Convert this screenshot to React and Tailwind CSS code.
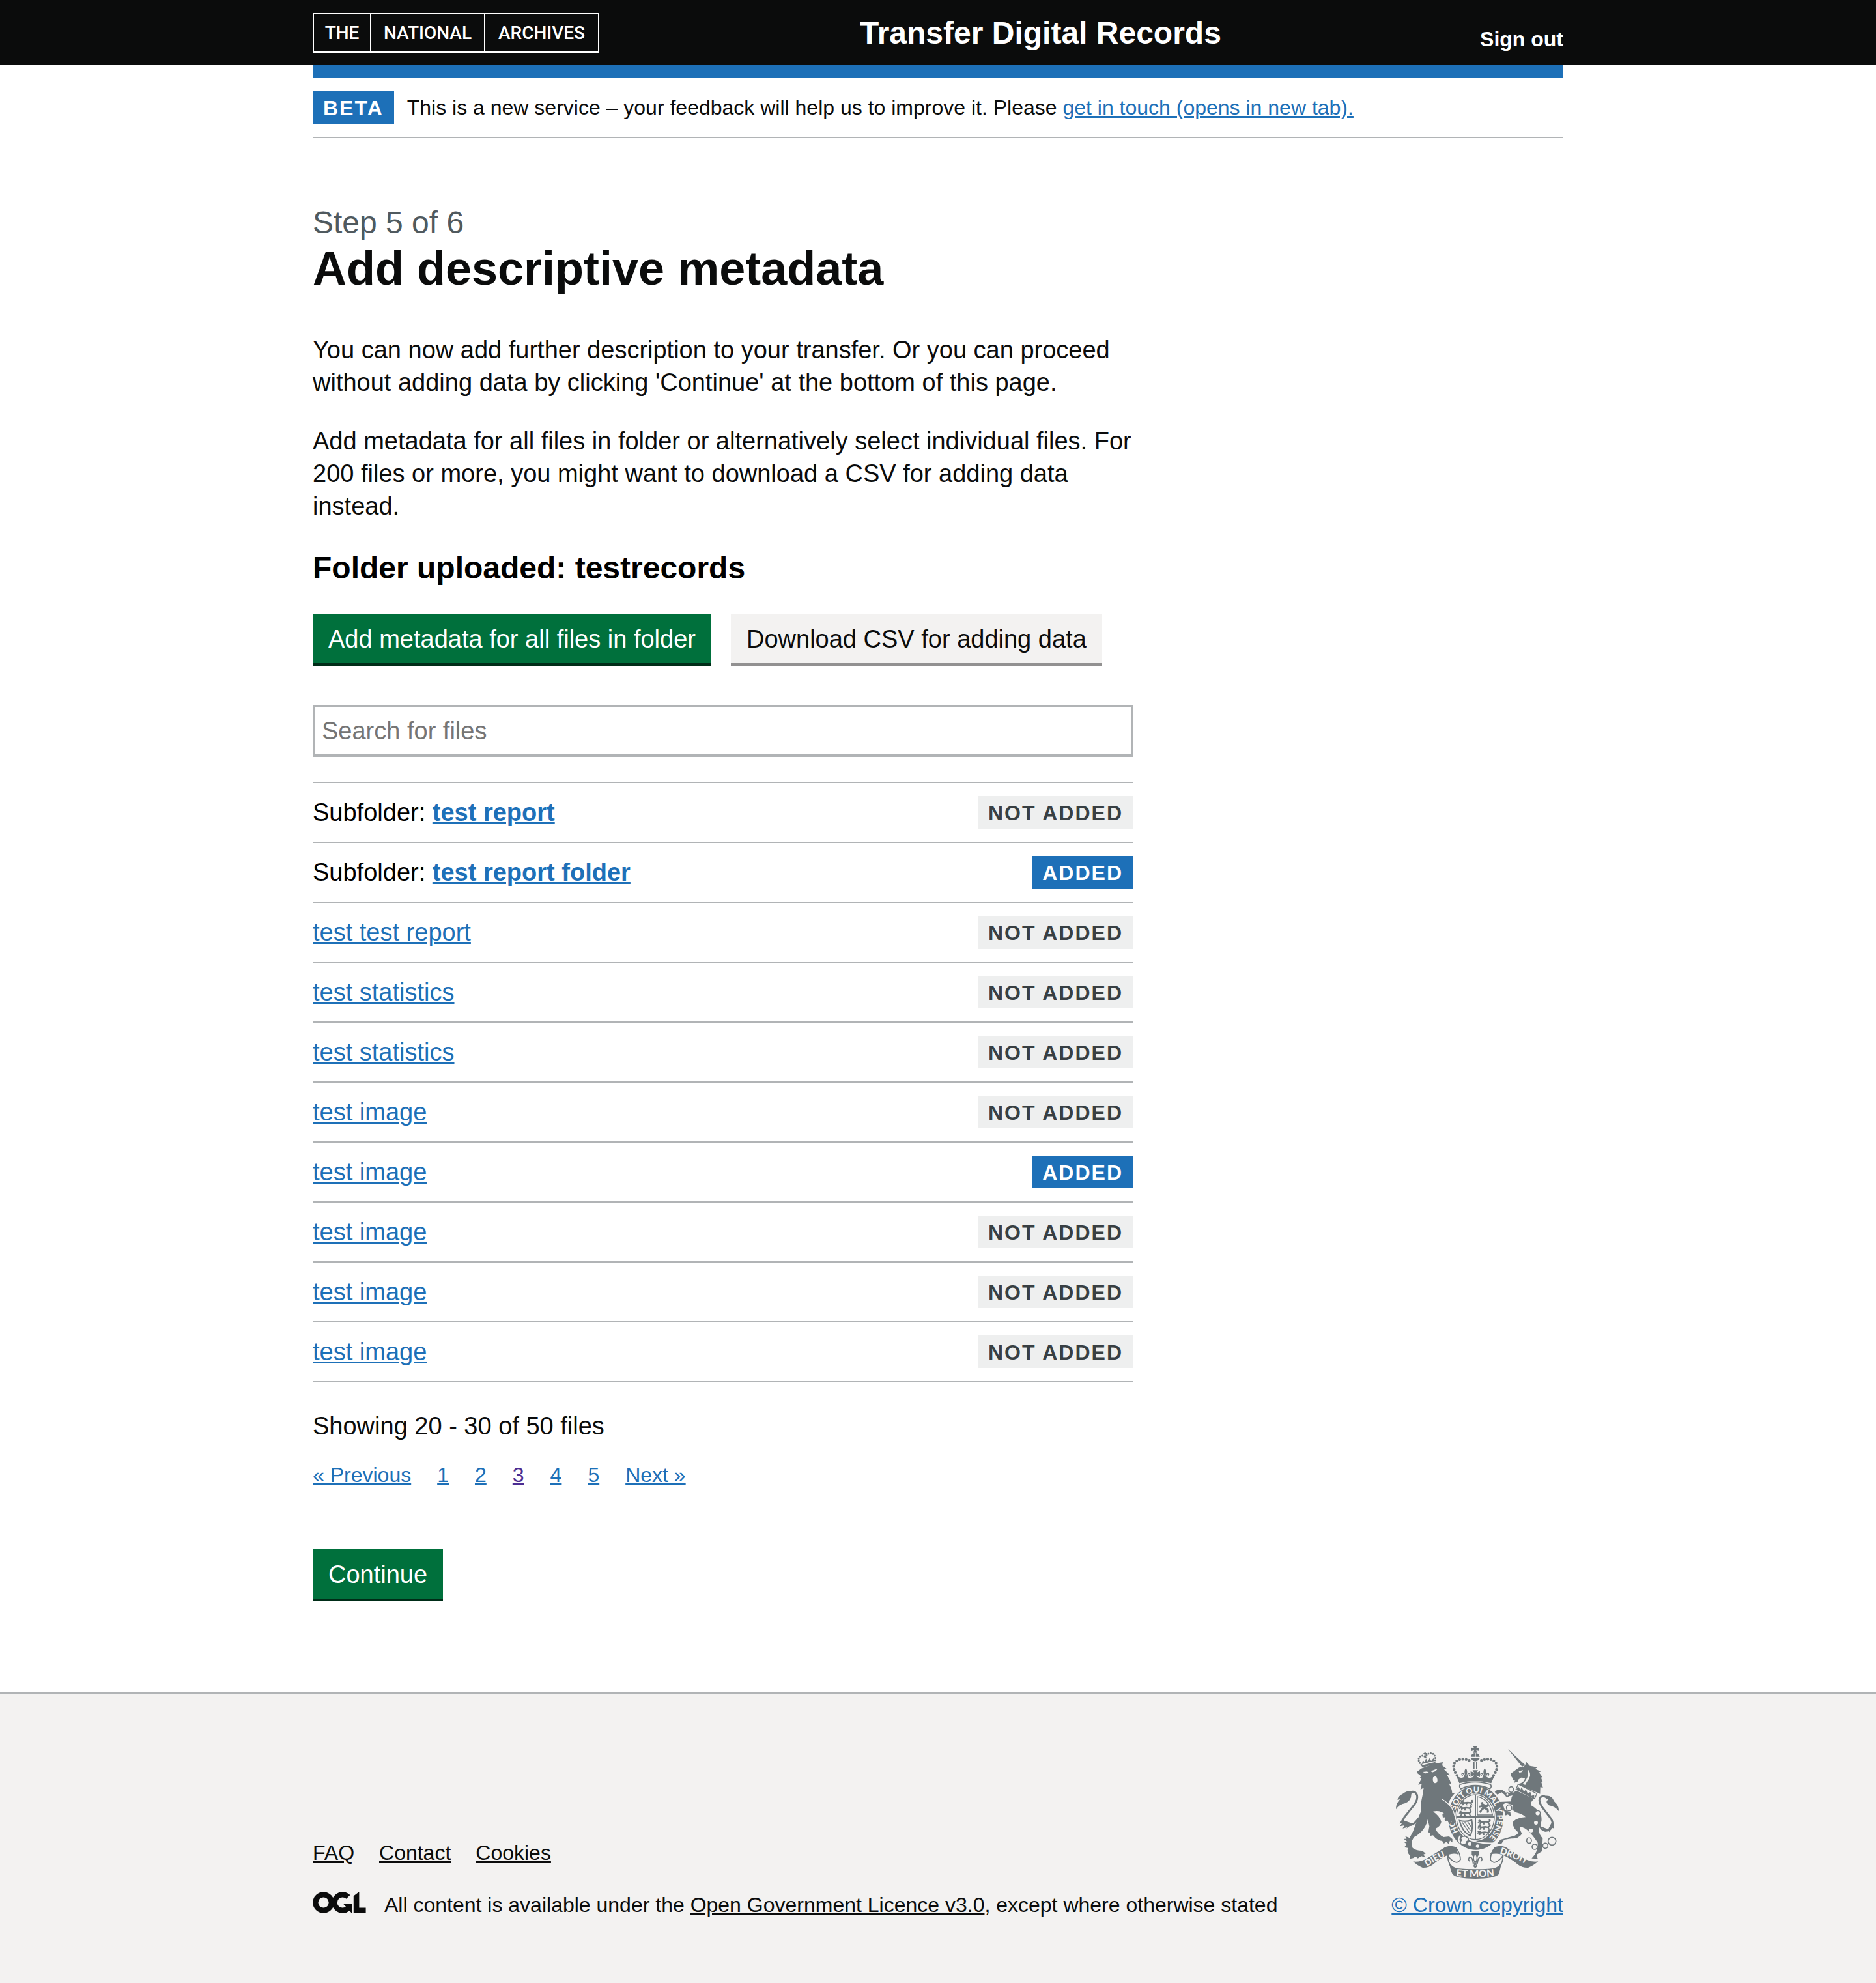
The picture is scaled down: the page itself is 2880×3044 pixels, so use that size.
const files = [
  { name: 'test report', folder: true, added: false },
  { name: 'test report folder', folder: true, added: true },
  { name: 'test test report', added: false },
  { name: 'test statistics', added: false },
  { name: 'test statistics', added: false },
  { name: 'test image', added: false },
  { name: 'test image', added: true },
  { name: 'test image', added: false },
  { name: 'test image', added: false },
  { name: 'test image', added: false },
];

const pages = ['« Previous', '1', '2', '3', '4', '5', 'Next »'];

function Container({ className = '', children }) {
  return <div className={'mx-auto w-full max-w-[1920px] ' + className}>{children}</div>;
}

function Tag({ tone, children }) {
  const tones = {
    blue: 'bg-[#1d70b8] text-white',
    grey: 'bg-[#eeefef] text-[#383f43]',
  };
  return (
    <strong className={'inline-block shrink-0 px-4 pt-[10px] pb-2 text-[32px] leading-8 font-bold tracking-[2px] uppercase ' + tones[tone]}>
      {children}
    </strong>
  );
}

function Button({ secondary, children }) {
  const look = secondary
    ? 'bg-[#f3f2f1] text-[#0b0c0c] shadow-[0_4px_0_#929191]'
    : 'bg-[#00703c] text-white shadow-[0_4px_0_#002d18]';
  return (
    <button type="button" className={'px-6 pt-5 pb-[18px] text-[38px] leading-[38px] ' + look}>
      {children}
    </button>
  );
}

function ArchivesLogo() {
  return (
    <a
      href="#"
      aria-label="The National Archives"
      className="grid h-[61px] w-fit grid-cols-[88px_175px_173px] divide-x-2 divide-white border-2 border-white text-center font-[Roboto,sans-serif] text-[28px] leading-[57px] font-medium text-white"
    >
      <span>THE</span>
      <span>NATIONAL</span>
      <span>ARCHIVES</span>
    </a>
  );
}

function OglLogo() {
  return (
    <svg viewBox="30 42 246 100" className="h-[33px] w-[82px] shrink-0" role="img" aria-label="Open Government Licence">
      <circle cx="79" cy="92" r="37" fill="none" stroke="#0b0c0c" strokeWidth="25" />
      <path d="M194 66A37 37 0 1 0 194 118" fill="none" stroke="#0b0c0c" strokeWidth="25" />
      <path d="M170 97H211V142L202 132L186 132L186 114Z" fill="#0b0c0c" />
      <path d="M219 62L245 42V116H276V141H219Z" fill="#0b0c0c" />
    </svg>
  );
}

function Crest() {
  const ink = '#6f777b';
  const paper = '#f3f2f1';
  const motto = { fill: paper, fontFamily: 'Lato, sans-serif', fontWeight: 900 };
  return (
    <svg viewBox="69 60 750 612" className="h-[204px] w-[250px]" fill={ink} aria-hidden="true">
      <defs>
        <path id="garter" d="M437 507A98 116 0 0 1 437 275A98 116 0 0 1 437 507" />
        <path id="dieu" d="M212 616Q262 584 322 556" />
        <path id="etmon" d="M346 660Q434 668 530 659" />
        <path id="droit" d="M546 556Q610 574 690 616" />
        <g id="passant">
          <path d="M0 6L7 0L13 2L17 7L34 5L46 7L52 3L49 -2L55 -4L60 2L57 10L52 12L55 19L60 21L50 22L46 14L34 13L30 17L34 22L24 22L24 14L17 15L13 22L4 22L9 18L9 12L3 16L-2 14L4 10Z" />
        </g>
        <g id="fleur">
          <path d="M0 -30Q-10 -14 -4 0L-3 14H3L4 0Q10 -14 0 -30Z" />
          <path d="M-5 12Q-8 -8 -17 -6Q-21 2 -14 5M5 12Q8 -8 17 -6Q21 2 14 5" fill="none" stroke={ink} strokeWidth="5" />
        </g>
      </defs>

      {/* lion: crown */}
      <path d="M186 150L250 134L254 142L191 160Z" />
      <path d="M186 147Q168 128 176 113Q190 98 205 112M205 112Q212 90 238 95Q256 108 248 131" fill="none" stroke={ink} strokeWidth="9" strokeLinecap="round" strokeDasharray="0 11" />
      <path d="M188 144L193 126L202 136L207 118L216 132L225 114L231 130L242 116L246 130Z" />
      <path d="M196 96H210M203 89V112" stroke={ink} strokeWidth="6" />

      {/* lion: body */}
      <path d="M168 178L186 164L245 142L285 135L282 150L303 166L290 167L319 196L303 193Q318 215 324 237L312 232Q328 258 328 278L342 276Q322 296 310 325L330 360L344 408L330 420L322 408L316 420L309 404L297 405L292 398L300 388L285 390L283 376L292 370L276 364Q262 357 240 362Q270 382 278 410Q274 430 250 442Q264 468 288 480L314 477L329 489V505L318 496L312 513L302 502L290 510L282 498Q258 496 240 472L228 474V460L218 458L223 430L215 398Q210 430 186 455Q165 475 152 480Q136 502 146 530Q165 544 190 543L206 556L196 560L204 574L186 568L170 578L160 570L148 577L134 580L135 566Q118 552 124 530L108 527L118 512L105 502L120 500L105 488L118 488L112 476L132 484Q150 455 160 420Q172 390 184 362Q182 320 192 285L197 252L182 262L188 234L172 240L187 210L178 208L186 200L168 186Z" />
      <path d="M193 180L212 178L222 184L205 187ZM230 176L262 164L252 176L236 182ZM240 205Q256 192 260 215Q262 232 248 232Q236 228 240 205Z" fill={paper} />
      <path d="M174 392Q150 432 118 424Q90 416 108 388L148 338Q174 306 165 284Q156 266 136 273" fill="none" stroke={ink} strokeWidth="9" />
      <path d="M146 270Q124 262 102 280Q78 292 76 308L88 306Q68 326 69 352Q82 330 112 324Q140 312 140 282Z" />
      <path d="M96 400L86 418L98 414L88 430L108 426L100 440L122 434L116 442L146 418Z" />

      {/* unicorn: horn, head and mane */}
      <path d="M585 75L664 148L650 156Z" />
      <path d="M598 198L600 186Q622 170 636 160L658 155L665 146L668 133L686 152L721 158L710 166L736 178L728 182L744 204L737 206L746 228L739 228L746 252L734 250L733 281L722 276L628 236Q660 232 664 208L646 206Q630 214 630 224L614 230L617 218L606 220L608 210Z" />
      <path d="M634 176L654 172L650 180L638 184ZM676 168Q700 192 672 226L664 240L654 234Q684 206 676 168Z" fill={paper} />
      <path d="M632 236L718 280L708 303L622 260Z" fill={paper} stroke={ink} strokeWidth="4" />
      <path d="M624 262L632 246L642 262L648 250L658 270L668 262L676 280L688 272L694 290L706 284L706 302Z" />

      {/* garter */}
      <ellipse cx="437" cy="391" rx="127" ry="148" />
      <ellipse cx="435" cy="389" rx="93" ry="109" fill={paper} />
      <ellipse cx="435" cy="388" rx="87" ry="103" fill={paper} stroke={ink} strokeWidth="4" />
      <text fontSize="37" {...motto}>
        <textPath href="#garter" startOffset="100">{'HO\u00a0\u00a0\u00a0\u00a0\u00a0SOIT QUI MAL Y PENSE'}</textPath>
      </text>
      <path d="M435 286V492M347 387H523" stroke={ink} strokeWidth="6" />

      {/* unicorn: body and legs */}
      <path d="M624 266L705 304Q686 322 692 334Q722 350 738 382Q744 410 730 436Q722 462 745 486L742 545L716 562L722 580L694 578Q724 548 722 506Q700 470 672 446Q652 432 640 432Q640 452 650 464Q634 488 600 487L568 492L554 512L534 512L550 492Q572 486 606 476Q630 470 632 458Q606 436 607 412Q620 392 666 388Q654 374 622 366L604 354L606 332L575 322L562 330L570 354L596 366L598 384L584 376L574 380L568 360L552 352L544 318L600 316Q598 300 606 288L580 294L556 274L536 284L524 272L536 262L560 264L582 280L608 276Z" />
      <path d="M730 424Q742 458 772 448Q802 432 784 396L744 344Q722 312 734 297Q752 284 768 304" fill="none" stroke={ink} strokeWidth="9" />
      <path d="M756 290Q788 286 798 316L808 326Q820 340 819 360Q800 338 774 334Q754 316 770 308Z" />
      <path d="M792 402L796 440L784 434L778 458L766 446L756 456L740 432L770 444Z" />
      <g fill={paper} stroke={ink} strokeWidth="5">
        <ellipse cx="600" cy="261" rx="11" ry="13" />
        <ellipse cx="582" cy="284" rx="7" ry="8" />
        <ellipse cx="590" cy="345" rx="12" ry="14" />
        <circle cx="722" cy="370" r="12" />
        <ellipse cx="682" cy="496" rx="11" ry="13" />
        <circle cx="708" cy="525" r="12" />
        <circle cx="757" cy="520" r="12" />
        <circle cx="788" cy="499" r="18" />
      </g>
      <circle cx="714" cy="414" r="9" fill={paper} />
      <circle cx="691" cy="450" r="9" fill={paper} />

      {/* royal crown */}
      <path d="M425 60H443L439 72L452 68V84L439 80L443 92H425L429 80L417 84V68L429 72Z" />
      <path d="M414 110Q418 94 432 93V110ZM437 93Q452 94 455 110H437ZM414 115H455Q452 130 434 131Q418 130 414 115Z" />
      <path d="M350 196Q326 160 340 138Q362 108 416 130M519 196Q543 160 529 138Q507 108 453 130" fill="none" stroke={ink} strokeWidth="13" strokeLinecap="round" strokeDasharray="0 15" />
      <path d="M428 134V168M441 134V168" stroke={ink} strokeWidth="6" />
      <path d="M344 192Q358 206 372 208Q384 204 390 196Q398 208 412 208L434 200L456 208Q472 208 479 196Q486 204 497 208Q512 206 525 192L508 232Q434 212 361 232Z" />
      <use href="#fleur" x="391" y="192" />
      <use href="#fleur" x="478" y="192" />
      <path d="M422 172H447L440 184L456 176V204L440 196L447 212H422L429 196L413 204V176L429 184Z" />
      <path d="M364 238Q434 214 505 238Q512 248 502 258Q434 226 368 258Q358 248 364 238Z" fill={paper} stroke={ink} strokeWidth="5" />

      {/* shield quarters */}
      <use href="#passant" x="366" y="312" />
      <use href="#passant" x="360" y="336" />
      <use href="#passant" x="358" y="359" />
      <use href="#passant" x="446" y="400" />
      <use href="#passant" x="446" y="424" />
      <use href="#passant" x="444" y="449" />
      <path d="M444 378V294Q498 304 514 378Z" fill="none" stroke={ink} strokeWidth="4" />
      <path d="M456 322L468 318L472 326L484 332L492 326L486 318L496 322L496 338L486 344L496 352L498 366L488 368L488 358L476 350L466 358L460 370L452 364L462 350L466 342L452 344L452 336L466 332Z" />
      <path d="M362 404Q388 412 418 402Q426 440 412 474Q374 456 362 404Z" fill="none" stroke={ink} strokeWidth="6" />
      <path d="M374 412L408 462M386 411L412 450M399 409L416 434" stroke={ink} strokeWidth="4" />

      {/* lion: foreleg over the garter */}
      <path d="M282 308Q318 330 332 362L346 408L332 422L324 408L316 422L306 402L290 380Z" />
      <path d="M282 306Q320 328 334 362L347 406" fill="none" stroke={paper} strokeWidth="4" />

      {/* buckle and strap */}
      <path d="M392 484Q440 512 520 508" fill="none" stroke={paper} strokeWidth="6" />
      <path d="M366 472Q350 492 368 512" stroke={paper} strokeWidth="6" fill="none" />
      <path d="M366 484Q384 468 400 484Q408 494 396 500Q394 516 374 516Q358 502 372 496Z" fill={paper} stroke={ink} strokeWidth="5" />
      <circle cx="409" cy="511" r="8" fill={paper} />
      <circle cx="445" cy="522" r="8" fill={paper} />
      <path d="M418 546H452V560L443 574H426L418 560Z" />
      <path d="M434 556Q420 574 430 592H439Q449 574 434 556ZM424 598Q422 572 408 572Q398 584 410 592M445 598Q447 572 461 572Q471 584 459 592M422 600H447M434 600L428 614L434 620L441 614Z" fill={paper} stroke={ink} strokeWidth="5" />

      {/* ribbons */}
      <path d="M148 592Q176 596 206 582L284 534Q312 514 345 526L356 560Q334 552 310 562Q270 580 240 606Q220 622 192 621Q168 612 148 592Z" />
      <path d="M724 592Q694 596 664 582L586 534Q558 514 525 526L502 560Q536 552 560 562Q600 580 630 606Q650 622 678 621Q702 612 724 592Z" />
      <path d="M345 528Q366 556 366 584Q352 606 332 590Q310 576 308 560M308 562Q306 590 324 620M525 528Q504 556 504 584Q518 606 538 590Q560 576 562 560M562 562Q564 590 546 620" fill="none" stroke={ink} strokeWidth="5" />
      <path d="M314 592Q322 616 350 624Q434 632 520 624Q548 616 556 592Q550 630 542 652Q520 672 435 672Q350 672 330 652Q318 630 314 592Z" />
      <text fontSize="41" {...motto}><textPath href="#dieu">DIEU</textPath></text>
      <text fontSize="45" {...motto}><textPath href="#etmon">ET MON</textPath></text>
      <text fontSize="42" {...motto}><textPath href="#droit">DROIT</textPath></text>
    </svg>
  );
}

export default function App() {
  return (
    <div className="min-h-screen bg-[#f3f2f1] font-['Liberation_Sans',Arial,sans-serif] text-[#0b0c0c]">
      <header className="bg-[#0b0c0c] text-white">
        <Container className="grid h-[100px] grid-cols-[7fr_9fr]">
          <div className="pt-5">
            <ArchivesLogo />
          </div>
          <div className="flex items-end justify-between pb-5">
            <a href="#" className="text-[48px] leading-[58px] font-bold">Transfer Digital Records</a>
            <a href="#" className="text-[32px] leading-10 font-bold">Sign out</a>
          </div>
        </Container>
      </header>

      <div className="bg-white">
        <Container>
          <div className="h-5 bg-[#1d70b8]" />
          <div className="flex items-center gap-5 border-b-2 border-[#b1b4b6] py-5 text-[32px] leading-10">
            <Tag tone="blue">Beta</Tag>
            <p>
              This is a new service – your feedback will help us to improve it. Please{' '}
              <a href="#" className="text-[#1d70b8] underline">get in touch (opens in new tab).</a>
            </p>
          </div>

          <main className="grid grid-cols-3 gap-[60px] pt-[100px] pb-36 text-[38px] leading-[50px]">
            <div className="col-span-2">
              <p className="text-[48px] leading-[60px] text-[#505a5f]">Step 5 of 6</p>
              <h1 className="mb-[60px] text-[72px] leading-[80px] font-bold">Add descriptive metadata</h1>
              <p className="mb-10">
                You can now add further description to your transfer. Or you can proceed without adding data by clicking
                'Continue' at the bottom of this page.
              </p>
              <p className="mb-10">
                Add metadata for all files in folder or alternatively select individual files. For 200 files or more, you
                might want to download a CSV for adding data instead.
              </p>
              <h2 className="mb-10 text-[48px] leading-[60px] font-bold text-black">Folder uploaded: testrecords</h2>
              <div className="flex flex-wrap gap-[30px]">
                <Button>Add metadata for all files in folder</Button>
                <Button secondary>Download CSV for adding data</Button>
              </div>

              <input
                type="search"
                aria-label="Search for files"
                placeholder="Search for files"
                className="mt-16 block h-20 w-full border-4 border-[#b1b4b6] bg-white px-[10px] text-[38px] placeholder:text-[#757575]"
              />

              <ul className="mt-[38px] mb-[42px] border-t-2 border-[#b1b4b6]">
                {files.map((file, i) => (
                  <li key={i} className="flex items-center justify-between border-b-2 border-[#b1b4b6] py-5 text-black">
                    <span>
                      {file.folder && 'Subfolder: '}
                      <a href="#" className={'text-[#1d70b8] underline' + (file.folder ? ' font-bold' : '')}>{file.name}</a>
                    </span>
                    <Tag tone={file.added ? 'blue' : 'grey'}>{file.added ? 'Added' : 'Not added'}</Tag>
                  </li>
                ))}
              </ul>

              <p className="mb-[30px]">Showing 20 - 30 of 50 files</p>
              <nav aria-label="Pagination" className="mb-[94px] flex gap-10 text-[32px] leading-10">
                {pages.map((page) => (
                  <a key={page} href="#" className={'underline ' + (page === '3' ? 'text-[#4c2c92]' : 'text-[#1d70b8]')}>
                    {page}
                  </a>
                ))}
              </nav>
              <Button>Continue</Button>
            </div>
          </main>
        </Container>
      </div>

      <footer className="border-t-2 border-[#b1b4b6] bg-[#f3f2f1] pt-20 pb-[100px] text-[32px] leading-10">
        <Container className="flex items-end justify-between">
          <div className="flex flex-col gap-10">
            <nav aria-label="Footer" className="flex gap-[38px]">
              <a href="#" className="underline">FAQ</a>
              <a href="#" className="underline">Contact</a>
              <a href="#" className="underline">Cookies</a>
            </nav>
            <div className="flex gap-7">
              <OglLogo />
              <p>
                All content is available under the <a href="#" className="underline">Open Government Licence v3.0</a>, except
                where otherwise stated
              </p>
            </div>
          </div>
          <a href="#" className="flex flex-col items-center gap-5 text-[#1d70b8] underline">
            <Crest />
            © Crown copyright
          </a>
        </Container>
      </footer>
    </div>
  );
}
